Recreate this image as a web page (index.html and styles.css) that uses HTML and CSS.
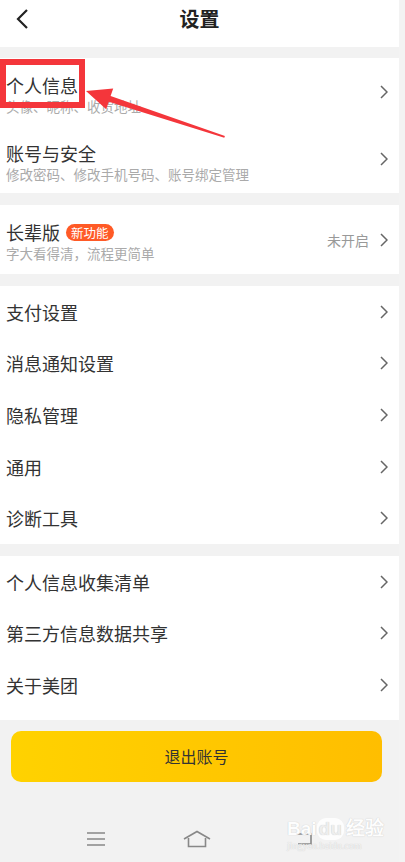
FILE: index.html
```html
<!DOCTYPE html>
<html lang="zh-CN">
<head>
  <meta charset="UTF-8">
  <title>设置</title>
  <link rel="stylesheet" href="styles.css">
</head>
<body>
<div class="screen">

  <header class="topbar">
    <svg class="back" width="16" height="20" viewBox="0 0 16 20"><polyline points="12,1 3,10 12,19" fill="none" stroke="#222" stroke-width="2.2"/></svg>
    <h1 class="title">设置</h1>
  </header>

  <section class="group">
    <div class="item tall">
      <div class="text">
        <div class="name">个人信息</div>
        <div class="sub">头像、昵称、收货地址</div>
      </div>
      <svg class="chev" width="8" height="14" viewBox="0 0 8 14"><polyline points="1,1 7,7 1,13" fill="none" stroke="#666" stroke-width="1.5"/></svg>
    </div>
    <div class="item tall">
      <div class="text">
        <div class="name">账号与安全</div>
        <div class="sub">修改密码、修改手机号码、账号绑定管理</div>
      </div>
      <svg class="chev" width="8" height="14" viewBox="0 0 8 14"><polyline points="1,1 7,7 1,13" fill="none" stroke="#666" stroke-width="1.5"/></svg>
    </div>
  </section>

  <section class="group">
    <div class="item tall elder">
      <div class="text">
        <div class="name">长辈版 <span class="badge">新功能</span></div>
        <div class="sub">字大看得清，流程更简单</div>
      </div>
      <span class="state">未开启</span>
      <svg class="chev" width="8" height="14" viewBox="0 0 8 14"><polyline points="1,1 7,7 1,13" fill="none" stroke="#666" stroke-width="1.5"/></svg>
    </div>
  </section>

  <section class="group">
    <div class="item"><div class="name">支付设置</div><svg class="chev" width="8" height="14" viewBox="0 0 8 14"><polyline points="1,1 7,7 1,13" fill="none" stroke="#666" stroke-width="1.5"/></svg></div>
    <div class="item"><div class="name">消息通知设置</div><svg class="chev" width="8" height="14" viewBox="0 0 8 14"><polyline points="1,1 7,7 1,13" fill="none" stroke="#666" stroke-width="1.5"/></svg></div>
    <div class="item"><div class="name">隐私管理</div><svg class="chev" width="8" height="14" viewBox="0 0 8 14"><polyline points="1,1 7,7 1,13" fill="none" stroke="#666" stroke-width="1.5"/></svg></div>
    <div class="item"><div class="name">通用</div><svg class="chev" width="8" height="14" viewBox="0 0 8 14"><polyline points="1,1 7,7 1,13" fill="none" stroke="#666" stroke-width="1.5"/></svg></div>
    <div class="item"><div class="name">诊断工具</div><svg class="chev" width="8" height="14" viewBox="0 0 8 14"><polyline points="1,1 7,7 1,13" fill="none" stroke="#666" stroke-width="1.5"/></svg></div>
  </section>

  <section class="group last">
    <div class="item"><div class="name">个人信息收集清单</div><svg class="chev" width="8" height="14" viewBox="0 0 8 14"><polyline points="1,1 7,7 1,13" fill="none" stroke="#666" stroke-width="1.5"/></svg></div>
    <div class="item"><div class="name">第三方信息数据共享</div><svg class="chev" width="8" height="14" viewBox="0 0 8 14"><polyline points="1,1 7,7 1,13" fill="none" stroke="#666" stroke-width="1.5"/></svg></div>
    <div class="item"><div class="name">关于美团</div><svg class="chev" width="8" height="14" viewBox="0 0 8 14"><polyline points="1,1 7,7 1,13" fill="none" stroke="#666" stroke-width="1.5"/></svg></div>
  </section>

  <div class="logout-wrap">
    <button class="logout">退出账号</button>
  </div>

  <nav class="sysbar">
    <svg class="nav-menu" width="20" height="16" viewBox="0 0 20 16"><path d="M1 2H19M1 8H19M1 14H19" stroke="#888" stroke-width="1.6"/></svg>
    <svg class="nav-home" width="28" height="18" viewBox="0 0 28 18"><path d="M1 9L14 1.5L27 9M5.5 8V16.5H22.5V8" fill="none" stroke="#888" stroke-width="1.6"/></svg>
    <svg class="nav-back" width="20" height="16" viewBox="0 0 20 16"><path d="M2 3H17V13H4" fill="none" stroke="#888" stroke-width="1.6"/></svg>
  </nav>

  <!-- annotation drawn over the screenshot -->
  <div class="mark"></div>
  <svg class="arrow" width="405" height="160" viewBox="0 0 405 160">
    <polygon points="86,91 113.2,88.5 110.6,96 224.9,135.9 224.3,137.7 108.8,101.7 106.2,109.3" fill="#f4363b"/>
  </svg>

  <div class="watermark">
    <div class="wm-logo">Bai<span class="wm-du">du</span>经验</div>
    <div class="wm-url">jingyan.baidu.com</div>
  </div>

</div>
</body>
</html>
```

FILE: styles.css
```css
body { margin: 0; background: #f3f3f3; font-family: "Noto Sans CJK SC", "Noto Sans", sans-serif; color: #333; }
.screen { position: relative; width: 399px; height: 862px; background: #f2f2f2; overflow: hidden; }

.topbar { height: 37px; padding-bottom: 10px; background: #fff; display: flex; align-items: center; justify-content: center; position: relative; }
.back { position: absolute; left: 15px; top: 9px; }
.title { margin: 0; font-size: 20px; font-weight: bold; color: #222; line-height: 37px; }

.group { background: #fff; margin-top: 11px; }
.group + .group { margin-top: 12px; }
.group.last { padding-bottom: 9px; }

.item { height: 51.6px; display: flex; align-items: center; padding: 0 11px 0 6px; box-sizing: border-box; }
.item.tall { height: 67.5px; align-items: flex-start; padding-top: 16px; }
.item.elder { height: 69px; }
.item.tall .chev, .item.tall .state { align-self: center; margin-top: -16px; }
.item .text { flex: 1; }
.item > .name { flex: 1; }
.name { font-size: 18px; line-height: 22px; color: #333; display: flex; align-items: center; }
.sub { font-size: 13.5px; line-height: 18px; color: #aaa; margin-top: 1px; }
.chev { display: block; }

.badge { margin-left: 6px; height: 17px; padding: 0 5px; border-radius: 9px; background: #ff5a26; color: #fff; font-size: 12.5px; line-height: 17px; }
.state { font-size: 14px; color: #999; margin-right: 11px; }

.logout-wrap { padding: 11px 0 0 11px; }
.logout { display: block; width: 371px; height: 51px; border: 0; border-radius: 10px; background: linear-gradient(90deg, #ffd200, #ffbe00); font-family: inherit; font-size: 16px; color: #333; }

.sysbar { display: flex; align-items: center; padding: 48px 0 0 86px; }
.nav-home { margin-left: 77px; }
.nav-back { margin-left: 83px; }

.mark { position: absolute; left: 0; top: 59px; width: 73px; height: 37px; border: 6px solid #f4363b; }
.arrow { position: absolute; left: 0; top: 0; }

.watermark { position: absolute; left: 287px; top: 818px; color: #fff; text-shadow: 0 0 1px #bbb; opacity: 0.9; }
.wm-logo { font-family: "Liberation Sans", sans-serif; font-size: 19px; font-weight: bold; line-height: 22px; }
.wm-du { display: inline-block; background: #fff; color: #eee; border-radius: 9px; padding: 0 2px; margin-right: 2px; }
.wm-url { font-family: "Liberation Serif", serif; font-size: 10px; line-height: 12px; color: #f6f6f6; }
```
